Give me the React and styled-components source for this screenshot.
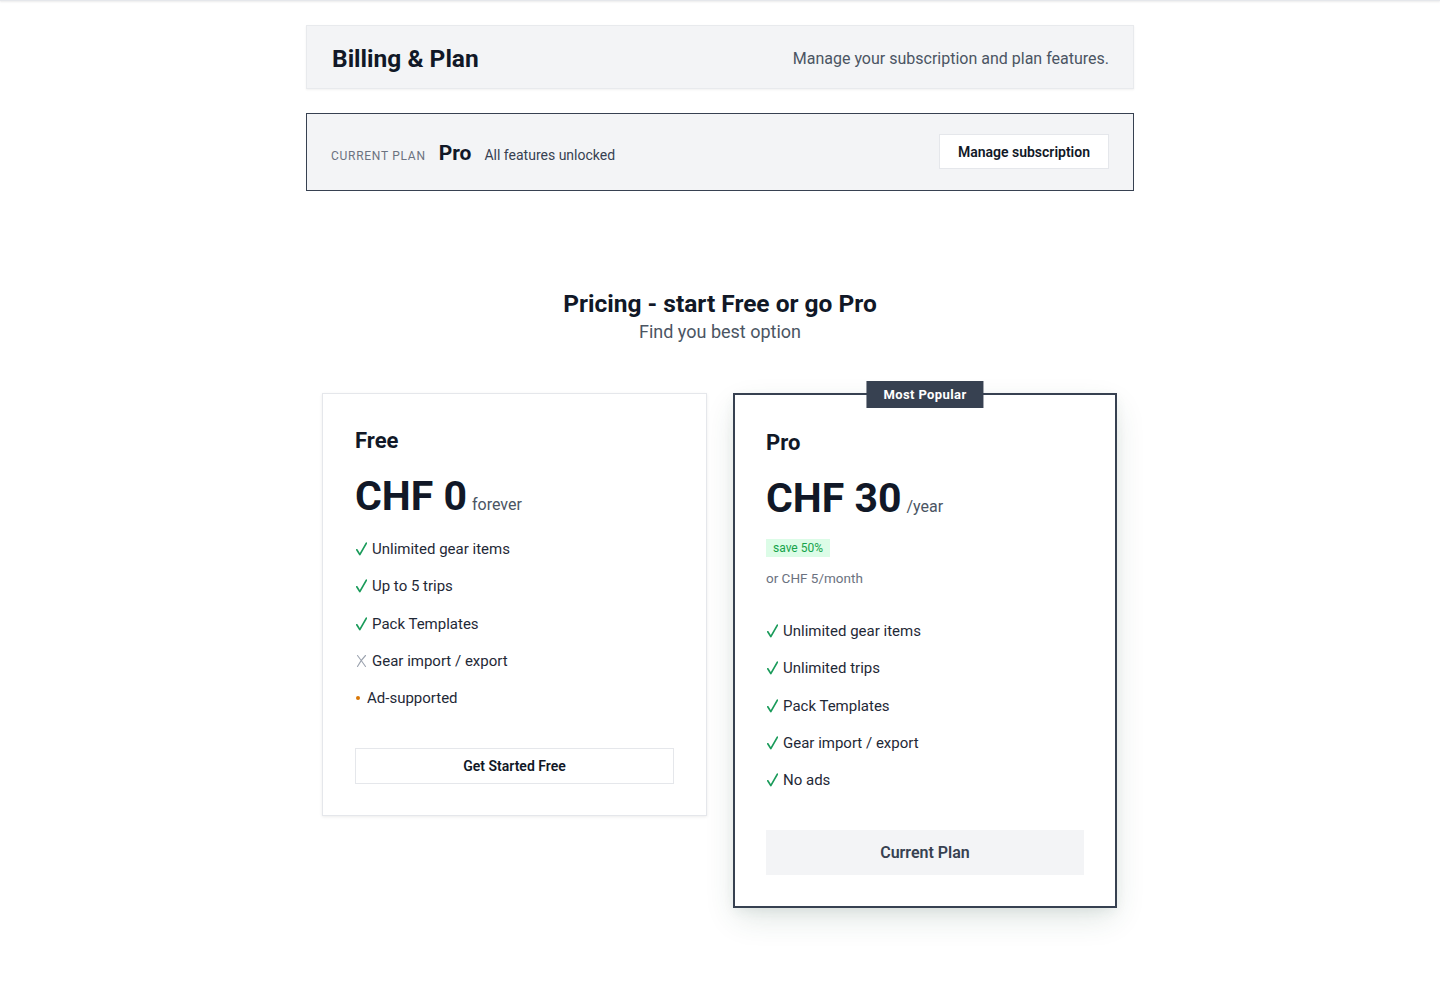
import React from "react";
import styled, { createGlobalStyle } from "styled-components";

const Global = createGlobalStyle`
  html, body { margin: 0; padding: 0; background: #ffffff; }
  body { font-family: Roboto, "Noto Sans", Arial, sans-serif; color: #111827; }
  * { box-sizing: border-box; }
`;

const TopEdge = styled.div`
  height: 1px;
  background: #e5e7eb;
  box-shadow: 0 1px 2px rgba(0, 0, 0, 0.12);
`;

const Page = styled.main`
  width: 828px;
  margin: 24px auto 0;
  padding-bottom: 80px;
`;

const HeaderCard = styled.header`
  display: flex;
  align-items: center;
  justify-content: space-between;
  height: 64px;
  padding: 3px 24px 0 25px;
  background: #f3f4f6;
  border: 1px solid #e8eaed;
  box-shadow: 0 1px 2px rgba(0, 0, 0, 0.06);
`;

const PageTitle = styled.h1`
  margin: 0;
  font-size: 24.5px;
  line-height: 32px;
  font-weight: 700;
  color: #111827;
`;

const PageSubtitle = styled.p`
  margin: 0;
  font-size: 16px;
  color: #4b5563;
`;

const CurrentPlanBox = styled.section`
  margin-top: 24px;
  display: flex;
  align-items: center;
  justify-content: space-between;
  height: 78px;
  padding: 0 24px;
  background: #f3f4f6;
  border: 1px solid #374151;
`;

const PlanInfo = styled.div`
  display: flex;
  align-items: baseline;
  gap: 13px;
  padding-top: 2px;
`;

const PlanLabel = styled.span`
  font-size: 12px;
  letter-spacing: 0.06em;
  text-transform: uppercase;
  color: #6b7280;
`;

const PlanName = styled.span`
  font-size: 21px;
  font-weight: 700;
  color: #111827;
`;

const PlanNote = styled.span`
  font-size: 14px;
  color: #374151;
`;

const OutlineButton = styled.button`
  font-family: inherit;
  height: 35px;
  margin-top: -1px;
  padding: 0 18px;
  background: #ffffff;
  border: 1px solid #e5e7eb;
  font-size: 14px;
  font-weight: 600;
  color: #111827;
  cursor: pointer;
`;

const PricingSection = styled.section`
  padding: 97px 16px 0;
  display: flex;
  flex-direction: column;
  align-items: center;
`;

const PricingTitle = styled.h2`
  margin: 0;
  font-size: 24.5px;
  line-height: 32px;
  font-weight: 700;
  color: #111827;
`;

const PricingSubtitle = styled.p`
  margin: -2px 0 0;
  font-size: 18px;
  line-height: 28px;
  color: #4b5563;
`;

const CardGrid = styled.div`
  margin-top: 47px;
  width: 100%;
  display: grid;
  grid-template-columns: 385px 384px;
  gap: 26px;
  align-items: start;
`;

const Card = styled.article`
  position: relative;
  background: #ffffff;
  padding: ${(p) => (p.$featured ? "33px 31px 31px" : "32px 32px 31px")};
  border: ${(p) => (p.$featured ? "2px solid #374151" : "1px solid #e5e7eb")};
  box-shadow: ${(p) =>
    p.$featured
      ? "0 12px 30px -4px rgba(40, 80, 60, 0.16), 0 4px 12px -2px rgba(40, 80, 60, 0.08)"
      : "0 1px 3px rgba(0, 0, 0, 0.08)"};
`;

const Badge = styled.span`
  position: absolute;
  top: -14px;
  left: 50%;
  transform: translateX(-50%);
  height: 27px;
  padding: 0 17px;
  display: flex;
  align-items: center;
  background: #374151;
  color: #ffffff;
  font-size: 13px;
  font-weight: 700;
  letter-spacing: 0.03em;
  white-space: nowrap;
`;

const CardTitle = styled.h3`
  margin: 0;
  font-size: 22px;
  line-height: 30px;
  font-weight: 700;
  color: #111827;
`;

const PriceRow = styled.div`
  margin-top: 15px;
  display: flex;
  align-items: baseline;
  gap: 5px;
`;

const Price = styled.span`
  font-size: 41px;
  line-height: 50px;
  font-weight: 700;
  color: #111827;
`;

const Period = styled.span`
  font-size: 16px;
  color: #4b5563;
`;

const SaveTag = styled.span`
  display: inline-flex;
  align-items: center;
  margin-top: 16px;
  height: 18px;
  padding: 0 7px;
  background: #dcfce7;
  color: #16a34a;
  font-size: 12px;
`;

const Monthly = styled.p`
  margin: 12px 0 0;
  font-size: 13.5px;
  line-height: 18px;
  color: #6b7280;
`;

const FeatureList = styled.ul`
  list-style: none;
  margin: ${(p) => (p.$spaced ? "32px" : "16px")} 0 0;
  padding: 0;
  display: flex;
  flex-direction: column;
  gap: 13.25px;
`;

const Feature = styled.li`
  display: flex;
  align-items: center;
  gap: ${(p) => (p.$kind === "dot" ? "7px" : "5px")};
  font-size: 15px;
  line-height: 24px;
  color: #1f2937;
`;

const MarkIcon = styled.svg`
  flex: none;
  display: block;
  margin-left: 1px;
`;

const Dot = styled.span`
  flex: none;
  width: 4px;
  height: 4px;
  margin-left: 1px;
  border-radius: 50%;
  background: #d97706;
`;

const Mark = ({ kind }) => {
  if (kind === "dot") return <Dot />;
  if (kind === "no")
    return (
      <MarkIcon width="11" height="14" viewBox="0 0 11 14">
        <path
          d="M1.5 1.5 Q5 6 9.5 12.5 M9.5 1.5 Q5 6 1.5 12.5"
          fill="none"
          stroke="#9ca3af"
          strokeWidth="1.1"
          strokeLinecap="round"
        />
      </MarkIcon>
    );
  return (
    <MarkIcon width="11" height="14" viewBox="0 0 11 14">
      <path
        d="M0.8 7.8 L3.8 12.6 L10.4 1.2"
        fill="none"
        stroke="#1a9b5a"
        strokeWidth="1.7"
        strokeLinecap="round"
        strokeLinejoin="round"
      />
    </MarkIcon>
  );
};

const CardButton = styled.button`
  font-family: inherit;
  display: block;
  width: 100%;
  margin-top: 38px;
  height: ${(p) => (p.$muted ? "45px" : "36px")};
  background: ${(p) => (p.$muted ? "#f3f4f6" : "#ffffff")};
  border: ${(p) => (p.$muted ? "none" : "1px solid #e5e7eb")};
  font-size: ${(p) => (p.$muted ? "16px" : "14px")};
  font-weight: 600;
  color: ${(p) => (p.$muted ? "#374151" : "#111827")};
  cursor: pointer;
`;

const FeatureItem = ({ kind, children }) => (
  <Feature $kind={kind}>
    <Mark kind={kind} />
    <span>{children}</span>
  </Feature>
);

export default function App() {
  return (
    <>
      <Global />
      <TopEdge />
      <Page>
        <HeaderCard>
          <PageTitle>Billing &amp; Plan</PageTitle>
          <PageSubtitle>Manage your subscription and plan features.</PageSubtitle>
        </HeaderCard>

        <CurrentPlanBox>
          <PlanInfo>
            <PlanLabel>Current plan</PlanLabel>
            <PlanName>Pro</PlanName>
            <PlanNote>All features unlocked</PlanNote>
          </PlanInfo>
          <OutlineButton>Manage subscription</OutlineButton>
        </CurrentPlanBox>

        <PricingSection>
          <PricingTitle>Pricing - start Free or go Pro</PricingTitle>
          <PricingSubtitle>Find you best option</PricingSubtitle>

          <CardGrid>
            <Card>
              <CardTitle>Free</CardTitle>
              <PriceRow>
                <Price>CHF 0</Price>
                <Period>forever</Period>
              </PriceRow>
              <FeatureList>
                <FeatureItem kind="yes">Unlimited gear items</FeatureItem>
                <FeatureItem kind="yes">Up to 5 trips</FeatureItem>
                <FeatureItem kind="yes">Pack Templates</FeatureItem>
                <FeatureItem kind="no">Gear import / export</FeatureItem>
                <FeatureItem kind="dot">Ad-supported</FeatureItem>
              </FeatureList>
              <CardButton>Get Started Free</CardButton>
            </Card>

            <Card $featured>
              <Badge>Most Popular</Badge>
              <CardTitle>Pro</CardTitle>
              <PriceRow>
                <Price>CHF 30</Price>
                <Period>/year</Period>
              </PriceRow>
              <SaveTag>save 50%</SaveTag>
              <Monthly>or CHF 5/month</Monthly>
              <FeatureList $spaced>
                <FeatureItem kind="yes">Unlimited gear items</FeatureItem>
                <FeatureItem kind="yes">Unlimited trips</FeatureItem>
                <FeatureItem kind="yes">Pack Templates</FeatureItem>
                <FeatureItem kind="yes">Gear import / export</FeatureItem>
                <FeatureItem kind="yes">No ads</FeatureItem>
              </FeatureList>
              <CardButton $muted>Current Plan</CardButton>
            </Card>
          </CardGrid>
        </PricingSection>
      </Page>
    </>
  );
}
